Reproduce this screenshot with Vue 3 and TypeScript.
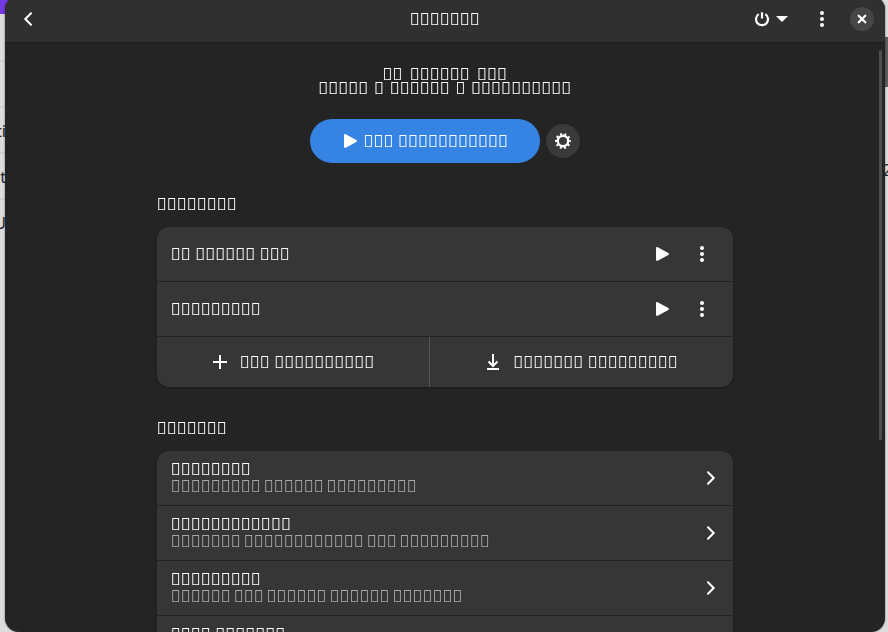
<script setup lang="ts">
interface Row {
  title: string
  subtitle: string
}

// U+E000 has no glyph in any face, so the face draws its empty box for it.
const BOX = '\uE000'
const words = (lengths: number[], space = ' '): string =>
  lengths.map((n) => BOX.repeat(n)).join(space)

const windowTitle = words([7])
const heroTitle = words([2, 6, 3], ' \u2006')
const heroMeta = words([5, 1, 6, 1, 10], '\u2004')
const runLabel = words([3, 11])
const programsLabel = words([8])
const programs: string[] = [words([2, 6, 3]), words([9])]
const addLabel = words([3, 10])
const importLabel = words([7, 9])
const optionsLabel = words([7])
const options: Row[] = [
  { title: words([8]), subtitle: words([9, 6, 9], '\u2006') },
  { title: words([12]), subtitle: words([7, 12, 3, 9], '\u2006') },
  { title: words([9]), subtitle: words([6, 3, 6, 6, 7], '\u2006') },
  { title: words([4, 7]), subtitle: words([8, 5], '\u2006') },
]
</script>

<template>
  <div class="desktop">
    <div class="behind left">
      <div class="accent"></div>
      <div class="cell"></div>
      <div class="cell"></div>
      <div class="cell">ti</div>
      <div class="cell">t</div>
      <div class="cell last">U</div>
    </div>
    <div class="behind right">
      <div class="patch"></div>
      <div class="figure">2</div>
    </div>

    <div class="window">
      <header class="bar">
        <div class="bar-side">
          <button class="plain back" type="button">
            <svg width="16" height="16" viewBox="0 0 16 16"><path d="M11 2.2 5.3 8 11 13.8" fill="none" stroke="currentColor" stroke-width="2" stroke-linecap="round" /></svg>
          </button>
        </div>
        <h1 class="glyphs">{{ windowTitle }}</h1>
        <div class="bar-side end">
          <button class="plain power" type="button">
            <svg width="16" height="16" viewBox="0 0 16 16"><path d="M4.7 3.2a6 6 0 1 0 6.6 0M8 1.2v6.3" fill="none" stroke="currentColor" stroke-width="2.2" /></svg>
            <svg width="14" height="16" viewBox="0 0 14 16"><path d="M1 5h12L7 11z" fill="currentColor" /></svg>
          </button>
          <button class="plain more" type="button">
            <svg width="16" height="16" viewBox="0 0 16 16" fill="currentColor"><circle cx="8" cy="2" r="2" /><circle cx="8" cy="8" r="2" /><circle cx="8" cy="14" r="2" /></svg>
          </button>
          <button class="round close" type="button">
            <svg width="16" height="16" viewBox="0 0 16 16"><path d="m4.7 4.7 6.6 6.6m0-6.6-6.6 6.6" stroke="currentColor" stroke-width="2.2" stroke-linecap="round" /></svg>
          </button>
        </div>
      </header>

      <main class="content">
        <div class="hero">
          <h2 class="glyphs tight">{{ heroTitle }}</h2>
          <p class="glyphs tight">{{ heroMeta }}</p>
        </div>

        <div class="launch">
          <button class="run" type="button">
            <svg width="16" height="16" viewBox="0 0 16 16"><path d="M2 2.2c0-1 .9-1.4 1.7-1l10.6 5.9c.8.5.8 1.3 0 1.8L3.7 14.8c-.8.4-1.7 0-1.7-1z" fill="currentColor" /></svg>
            <span class="glyphs">{{ runLabel }}</span>
          </button>
          <button class="round gear" type="button">
            <svg width="16" height="16" viewBox="0 0 16 16" fill="none" stroke="currentColor"><circle cx="8" cy="8" r="5.2" stroke-width="2.4" /><circle cx="8" cy="8" r="6.9" stroke-width="2.2" stroke-dasharray="1.9 2.435" stroke-dashoffset=".95" /></svg>
          </button>
        </div>

        <section>
          <h3 class="glyphs">{{ programsLabel }}</h3>
          <div class="card">
            <div v-for="(name, i) in programs" :key="i" class="row program">
              <span class="glyphs name">{{ name }}</span>
              <button class="plain" type="button">
                <svg width="16" height="16" viewBox="0 0 16 16"><path d="M2 2.2c0-1 .9-1.4 1.7-1l10.6 5.9c.8.5.8 1.3 0 1.8L3.7 14.8c-.8.4-1.7 0-1.7-1z" fill="currentColor" /></svg>
              </button>
              <button class="plain" type="button">
                <svg width="16" height="16" viewBox="0 0 16 16" fill="currentColor"><circle cx="8" cy="2" r="2" /><circle cx="8" cy="8" r="2" /><circle cx="8" cy="14" r="2" /></svg>
              </button>
            </div>
            <div class="actions">
              <button type="button">
                <svg width="16" height="16" viewBox="0 0 16 16"><path d="M8 1v14M1 8h14" stroke="currentColor" stroke-width="2" /></svg>
                <span class="glyphs">{{ addLabel }}</span>
              </button>
              <button type="button">
                <svg width="16" height="16" viewBox="0 0 16 16"><path d="M8 0v11M3.5 7.5 8 12l4.500-4.500M2 15h12" fill="none" stroke="currentColor" stroke-width="2" /></svg>
                <span class="glyphs">{{ importLabel }}</span>
              </button>
            </div>
          </div>
        </section>

        <section>
          <h3 class="glyphs">{{ optionsLabel }}</h3>
          <div class="card">
            <a v-for="(item, i) in options" :key="i" href="#" class="row option">
              <span class="texts">
                <span class="glyphs">{{ item.title }}</span>
                <span class="glyphs dim">{{ item.subtitle }}</span>
              </span>
              <svg width="16" height="16" viewBox="0 0 16 16"><path d="M5 2.2 10.7 8 5 13.8" fill="none" stroke="currentColor" stroke-width="2" stroke-linecap="round" /></svg>
            </a>
          </div>
        </section>
      </main>
      <div class="thumb"></div>
    </div>
  </div>
</template>

<style>
body {
  overflow: hidden;
}
</style>

<style scoped>
.desktop {
  position: relative;
  display: flex;
  height: 100vh;
  overflow: hidden;
  background: #dcdcdc;
  font-family: "Noto Sans", sans-serif;
}

.behind {
  position: absolute;
  top: 0;
  bottom: 0;
  width: 20px;
  color: #1f2328;
  font-size: 16px;
  overflow: hidden;
}

.left {
  left: 0;
}

.right {
  right: 0;
}

.accent {
  height: 14px;
  margin-bottom: 2px;
  background: #7438e4;
}

.cell {
  height: 46px;
  box-sizing: border-box;
  border-bottom: 2px solid #d0d0d0;
  line-height: 46px;
  direction: rtl;
  width: 6px;
}

.last {
  border-bottom: 0;
}

.patch {
  margin-top: 37px;
  height: 50px;
  background: #5b605e;
}

.figure {
  margin-top: 70px;
  line-height: 26px;
  text-align: right;
  margin-right: -4px;
}

.window {
  position: relative;
  z-index: 1;
  flex: 1;
  min-width: 0;
  margin: -4px 3px 0 5px;
  padding-top: 4px;
  border-radius: 14px;
  overflow: hidden;
  background: #242424;
  color: #fff;
  box-shadow: 0 0 2px rgba(0, 0, 0, 0.6);
  will-change: transform;
}

.window::before {
  content: "";
  display: block;
  height: 4px;
  margin-top: -4px;
  background: #303030;
}

.glyphs {
  margin: 0;
  font: bold 17px/17px "Noto Sans", sans-serif;
  white-space: nowrap;
}

.tight {
  line-height: 14px;
}

button {
  display: flex;
  align-items: center;
  justify-content: center;
  border: 0;
  padding: 0;
  background: none;
  color: inherit;
}

svg {
  display: block;
  flex: none;
}

.bar {
  display: flex;
  align-items: center;
  height: 38px;
  padding: 0 11px 4px;
  border-bottom: 1px solid #1d1d1d;
  background: #303030;
}

.bar-side {
  display: flex;
  flex: 1;
  align-items: center;
}

.back {
  margin-left: 4px;
}

.end {
  justify-content: flex-end;
}

.power {
  gap: 5px;
  margin-right: 25px;
}

.more {
  margin-right: 20px;
}

.round {
  border-radius: 50%;
}

.close {
  width: 24px;
  height: 24px;
  background: #464646;
}

.content {
  max-width: 576px;
  margin: 0 auto;
  padding: 24px 0;
}

.hero {
  text-align: center;
}

.launch {
  display: flex;
  align-items: center;
  justify-content: center;
  gap: 6px;
  margin-top: 24px;
}

.run {
  gap: 6px;
  height: 44px;
  padding: 0 32px;
  border-radius: 22px;
  background: #3584e4;
}

.gear {
  width: 34px;
  height: 34px;
  background: #3a3a3a;
}

section {
  margin-top: 32px;
}

.card {
  margin-top: 15px;
  border-radius: 12px;
  overflow: hidden;
  background: #363636;
  box-shadow: 0 1px 3px rgba(0, 0, 0, 0.3);
}

.row {
  display: flex;
  align-items: center;
  height: 54px;
  padding: 0 14px;
  border-bottom: 1px solid #242424;
  color: #fff;
  text-decoration: none;
}

.program {
  gap: 24px;
  padding-right: 23px;
}

.name,
.texts {
  flex: 1;
}

.texts {
  display: flex;
  flex-direction: column;
}

.name,
.texts,
.bar .glyphs,
button .glyphs {
  padding-bottom: 2px;
}

.dim {
  color: #a8a8a8;
}

.actions {
  display: flex;
  height: 50px;
}

.actions button {
  flex: 1 1 auto;
  gap: 12px;
}

.actions button + button {
  border-left: 1px solid #555;
}

.thumb {
  position: absolute;
  top: 54px;
  right: 3px;
  width: 3px;
  height: 390px;
  border-radius: 2px;
  background: #4e4e4e;
}
</style>
